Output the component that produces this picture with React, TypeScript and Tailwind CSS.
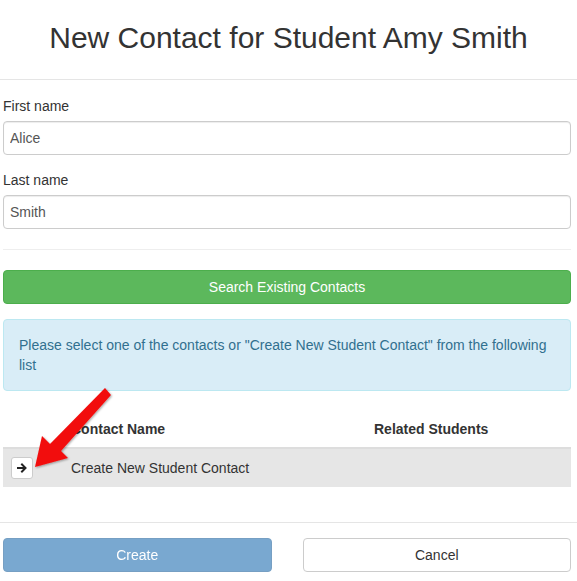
import React from 'react';

const font = { fontFamily: '"Liberation Sans", Arial, sans-serif' };

function Field({ label, value }: { label: string; value: string }) {
  return (
    <div className="mb-[15px]">
      <label className="block mb-[5px] text-[14px] leading-[20px] text-[#333]">{label}</label>
      <input
        readOnly
        value={value}
        className="block w-full h-[34px] px-[6px] border border-[#ccc] rounded-[4px] text-[14px] text-[#555] bg-white shadow-[inset_0_1px_1px_rgba(0,0,0,0.075)] outline-none"
        style={font}
      />
    </div>
  );
}

function RedArrow() {
  return (
    <svg className="absolute left-0 top-0 pointer-events-none" width="577" height="581" viewBox="0 0 577 581">
      <defs>
        <filter id="sh" x="-20%" y="-20%" width="140%" height="140%">
          <feDropShadow dx="1" dy="1" stdDeviation="1.2" floodColor="#000" floodOpacity="0.35" />
        </filter>
      </defs>
      <polygon
        filter="url(#sh)"
        fill="#f20d0d"
        points="105,388 111,395 61,451 68,458 35,467 42,436 50,444"
      />
    </svg>
  );
}

export default function App() {
  return (
    <div className="relative w-[577px] h-[581px] bg-white overflow-hidden text-[#333]" style={font}>
      <div className="h-[80px] flex items-center justify-center border-b border-[#e5e5e5]">
        <h1 className="text-[30px] leading-[33px] text-[#333] pb-[4px]">New Contact for Student Amy Smith</h1>
      </div>

      <div className="pl-[3px] pr-[6px] pt-[16px] pb-[15px]">
        <Field label="First name" value="Alice" />
        <Field label="Last name" value="Smith" />

        <hr className="mt-[20px] mb-[20px] border-0 border-t border-[#eee]" />

        <button className="block w-full h-[34px] rounded-[4px] bg-[#5cb85c] border border-[#4cae4c] text-white text-[14px]">
          Search Existing Contacts
        </button>

        <div className="mt-[15px] mb-[20px] px-[15px] py-[15px] bg-[#d9edf7] border border-[#bce8f1] rounded-[4px] text-[#31708f] text-[14px] leading-[20px]">
          Please select one of the contacts or "Create New Student Contact" from the following list
        </div>

        <div className="text-[14px] leading-[20px] mb-[20px]">
          <div className="grid grid-cols-[60px_303px_1fr] border-b-2 border-[#ddd]">
            <div className="p-[8px]" />
            <div className="p-[8px] font-bold">Contact Name</div>
            <div className="p-[8px] font-bold">Related Students</div>
          </div>
          <div className="grid grid-cols-[60px_303px_1fr] bg-[#e6e6e6] items-center">
            <div className="p-[8px]">
              <button className="flex items-center justify-center w-[22px] h-[22px] bg-white border border-[#ccc] rounded-[3px]">
                <svg width="11" height="10" viewBox="0 0 11 10">
                  <path d="M1 5h7M5 1.5L8.5 5 5 8.5" stroke="#222" strokeWidth="2" fill="none" strokeLinecap="square" />
                </svg>
              </button>
            </div>
            <div className="p-[8px]">Create New Student Contact</div>
            <div className="p-[8px]" />
          </div>
        </div>
      </div>

      <div className="border-t border-[#e5e5e5] pt-[15px] pl-[3px] pr-[6px] grid grid-cols-2 gap-[31px]">
        <button className="h-[34px] rounded-[4px] bg-[#337ab7] border border-[#2e6da4] text-white text-[14px] opacity-65">
          Create
        </button>
        <button className="h-[34px] rounded-[4px] bg-white border border-[#ccc] text-[#333] text-[14px]">
          Cancel
        </button>
      </div>

      <RedArrow />
    </div>
  );
}
